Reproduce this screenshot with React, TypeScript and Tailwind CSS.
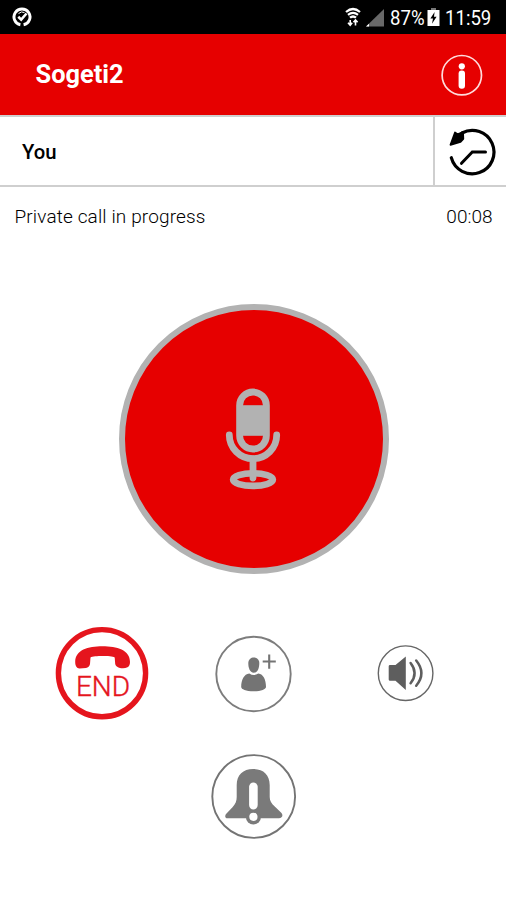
import type { ReactNode } from "react";
import clsx from "clsx";

function StatusBar() {
  return (
    <div className="flex h-[34px] shrink-0 items-center bg-black pr-[14px] pl-3 text-white">
      <svg width="20" height="20" viewBox="0 0 20 20" fill="none" stroke="currentColor">
        <path d="M8.4 17.8 A8 8 0 1 1 11.6 17.8" strokeWidth="3" />
        <path d="M6.3 9.8 L9.2 12.6 L14.5 6.5" strokeWidth="2.6" />
        <path d="M6.5 6.6 Q9.5 3.8 12.5 5.6" strokeWidth="1" />
      </svg>

      <div className="ml-auto flex items-center">
        <svg width="16" height="20" viewBox="0 0 16 20" fill="none" stroke="currentColor">
          <path d="M1 5 Q8 -1 15 5" strokeWidth="2.2" />
          <path d="M3 7.9 Q8 3.8 13 7.9" strokeWidth="2.1" />
          <path d="M5 10.7 Q8 8.2 11 10.7" strokeWidth="2.4" />
          <path d="M5.2 13 V18 M3 15.8 L5.2 18.2 L7.2 15.8 M10.5 18.5 V13.2 M8.5 15.3 L10.5 13 L12.6 15.3" strokeWidth="1.6" />
        </svg>
        <svg width="20" height="20" viewBox="0 0 20 20" className="ml-1">
          <path d="M19 2 V19.5 H1 Z" fill="#686868" />
          <path d="M4 16.8 V19.5 H1 Z" fill="#fff" />
        </svg>
        <span className="mt-0.5 ml-[5px] w-[34px] origin-left scale-x-[0.93] text-xl leading-none">87%</span>
        <svg width="13" height="20" viewBox="0 0 13 20" className="ml-[3px]">
          <path d="M4 1 H9 V3 H12.5 V19 H0.5 V3 H4 Z" fill="#fff" />
          <path d="M4 1 H9 V3 H4 Z" fill="#777" />
          <path d="M7.6 5 L3.4 11.5 H6 L5 16.8 L9.6 9.8 H7 Z" fill="#000" />
        </svg>
        <span className="mt-0.5 ml-[5px] w-[47px] origin-left scale-x-[0.93] text-xl leading-none">11:59</span>
      </div>
    </div>
  );
}

function Header() {
  return (
    <header className="flex h-[81px] shrink-0 items-center justify-between bg-[#e60000] pr-[23px] pl-[35.5px] text-white">
      <h1 className="text-[25.4px] leading-none font-bold">Sogeti2</h1>
      <button type="button" aria-label="Info">
        <svg width="42" height="42" viewBox="0 0 42 42">
          <circle cx="20.8" cy="21.2" r="19.7" fill="none" stroke="#ffdcdc" strokeWidth="1.7" />
          <circle cx="20.8" cy="12.3" r="3.1" fill="#fff" />
          <rect x="17.6" y="16.5" width="6.4" height="18.2" rx="3" fill="#fff" />
        </svg>
      </button>
    </header>
  );
}

function ContactRow() {
  return (
    <div className="flex h-[72px] shrink-0 border-y-2 border-[#cfcfcf]">
      <div className="flex w-[435px] items-center border-r-2 border-[#cfcfcf] pt-0.5 pl-[22px] text-[20.3px] font-medium text-black">
        You
      </div>
      <button type="button" aria-label="Call history">
        <svg width="71" height="68" viewBox="0 0 71 68" fill="none" stroke="#000" strokeLinecap="round">
          <path d="M16.3 40.7 A21.7 21.7 0 1 0 27 16" strokeWidth="3.2" />
          <path d="M50.5 35 H37.3 L26.5 46.3" strokeWidth="3" />
          <path d="M15.5 27.8 L20 15.5 L22.5 17.3 L28 15 L28.3 21.8 L25.5 25 Z" fill="#000" strokeWidth="1.8" strokeLinejoin="round" />
        </svg>
      </button>
    </div>
  );
}

function TalkButton() {
  return (
    <button
      type="button"
      aria-label="Talk"
      className="flex size-[270px] items-center justify-center rounded-full border-[6.5px] border-[#b2b2b2] bg-[#e60000]"
    >
      <svg width="58" height="102" viewBox="0 0 58 102" fill="none" stroke="#b2b2b2" strokeWidth="6.8">
        <rect x="14.6" y="4" width="26.8" height="57" rx="13.4" />
        <path d="M15 17.2 H41.4 V47.8 H15 Z" fill="#b2b2b2" stroke="none" />
        <path d="M4.3 47 A23.7 23.7 0 0 0 51.7 47" strokeLinecap="round" />
        <path d="M28 71 V90" strokeLinecap="round" />
        <ellipse cx="28" cy="91.6" rx="19.9" ry="6.3" strokeWidth="6.6" />
      </svg>
    </button>
  );
}

type RoundButtonProps = { label: string; size: number; className?: string; children: ReactNode };

function RoundButton({ label, size, className, children }: RoundButtonProps) {
  return (
    <button type="button" aria-label={label} className={clsx("shrink-0", className)}>
      <svg width={size} height={size} viewBox={`0 0 ${size} ${size}`} className="block">
        {children}
      </svg>
    </button>
  );
}

export default function App() {
  return (
    <div className="flex h-[900px] w-[506px] flex-col overflow-hidden bg-white font-[Roboto,sans-serif]">
      <StatusBar />
      <Header />
      <ContactRow />

      <div className="mt-[18px] flex h-6 shrink-0 items-center justify-between pr-[13.5px] pl-[14.5px] text-[19px] font-light text-black">
        <span className="tracking-[0.13px]">Private call in progress</span>
        <span>00:08</span>
      </div>

      <div className="mt-[75px] flex pl-[118.5px]">
        <TalkButton />
      </div>

      <div className="mt-[52px] flex items-start pl-[55px]">
        <RoundButton label="End call" size={94}>
          <circle cx="47" cy="47.2" r="43.6" fill="none" stroke="#e5151d" strokeWidth="5.4" />
          <path
            d="M20.2 36 C20.2 24 33 20.3 47.4 20.3 C62 20.3 75 24 75 36 C75 38.5 74.2 40.6 72.5 41.3 C70 42.6 67 42.6 64 41.7 C62 41 60.6 39.8 60.2 38 L59.7 31.5 C56 29.6 39 29.6 35.5 31.5 L35 38 C34.6 40.5 33 41.5 31 41.9 L24.5 42.5 C21.5 42.5 20.2 39.5 20.2 36 Z"
            fill="#e5151d"
          />
          <text
            x="48"
            y="70.3"
            textAnchor="middle"
            fill="#e5151d"
            stroke="#e5151d"
            strokeWidth="0.4"
            fontSize="28"
            fontWeight="300"
          >
            END
          </text>
        </RoundButton>

        <RoundButton label="Add participant" size={78} className="mt-[9px] ml-[66px]">
          <circle cx="38.5" cy="39" r="37.2" fill="none" stroke="#7d7d7d" strokeWidth="1.9" />
          <path d="M33.3 28 C33.3 20.5 44.3 20.5 44.3 28 C44.3 32.5 43 37.7 38.8 37.7 C34.6 37.7 33.3 32.5 33.3 28 Z" fill="#747474" />
          <path d="M34.3 38.6 Q38.8 41.6 43.3 38.6 C48.5 39.2 51 45 51 52 C51 54.3 46 56.3 38.5 56.3 C31 56.3 26.2 54.3 26.2 52 C26.2 45 29 39.2 34.3 38.6 Z" fill="#747474" />
          <path d="M47.7 26.5 H60.8 M54.2 19.5 V33.8" stroke="#747474" strokeWidth="2.1" />
        </RoundButton>

        <RoundButton label="Speaker" size={58} className="mt-[18px] ml-[84px]">
          <circle cx="28.6" cy="29.2" r="27.3" fill="none" stroke="#666" strokeWidth="1.4" />
          <path d="M13 21 H18.5 L28.8 12.5 V46 L18.5 36.8 H13 Q11.7 36.8 11.7 35.5 V22.3 Q11.7 21 13 21 Z" fill="#5e5e5e" />
          <g fill="none" stroke="#5e5e5e" strokeWidth="2.5" strokeLinecap="round">
            <path d="M33.6 19 Q41.6 29.2 33.6 39.3" />
            <path d="M39.2 16.5 Q49.6 29.2 39.2 41.7" />
          </g>
        </RoundButton>
      </div>

      <div className="mt-[34px] flex pl-[211px]">
        <RoundButton label="Alarm" size={86}>
          <circle cx="42.7" cy="42.5" r="41.4" fill="none" stroke="#747474" strokeWidth="1.9" />
          <path
            d="M25.7 31 C25.7 21 32 15 42.2 15 C52.4 15 58.7 21 58.7 31 V43 C58.7 47 60.5 49.5 63.5 52.3 L70.5 59 C72.5 61.5 71 64.3 68 64.3 H16.5 C13.8 64.3 13.5 61.5 15.5 59.5 L21.5 53.3 C24.5 50 25.7 47 25.7 43 Z"
            fill="#7a7a7a"
          />
          <circle cx="42.4" cy="62.8" r="7.6" fill="#7a7a7a" />
          <rect x="38.1" y="28.4" width="8.6" height="27" rx="4.3" fill="#fff" />
          <circle cx="42.4" cy="62.8" r="4.1" fill="#fff" />
        </RoundButton>
      </div>
    </div>
  );
}
